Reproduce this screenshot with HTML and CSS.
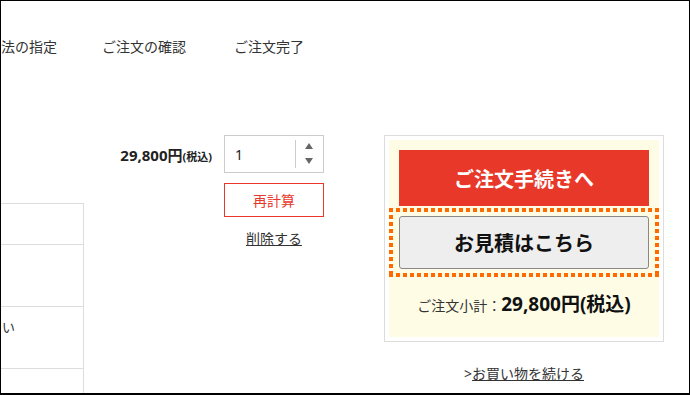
FILE: index.html
```html
<!DOCTYPE html>
<html>
<head>
  <title>ショッピングカート</title>
  <link rel="stylesheet" href="styles.css">
</head>
<body>
  <div class="frame">
    <ul class="steps">
      <li>法の指定</li>
      <li>ご注文の確認</li>
      <li>ご注文完了</li>
    </ul>

    <div class="cart">
      <div class="cart-table">
        <div class="cart-row row-head"></div>
        <div class="cart-row"></div>
        <div class="cart-row"><span class="row-text">い</span></div>
        <div class="cart-row"></div>
      </div>

      <div class="item-price">29,800円<small>(税込)</small></div>

      <div class="item-qty">
        <div class="qty-box">
          <span class="qty-value">1</span>
          <span class="qty-spin">
            <svg width="8" height="22" viewBox="0 0 8 22">
              <polygon points="4,0 8,6 0,6" fill="#666"/>
              <polygon points="0,15 8,15 4,21" fill="#666"/>
            </svg>
          </span>
        </div>
        <button class="btn-recalc">再計算</button>
        <a href="#" class="link-delete">削除する</a>
      </div>

      <div class="summary-col">
        <div class="summary">
          <div class="summary-inner">
            <button class="btn-order">ご注文手続きへ</button>
            <div class="estimate">
              <button class="btn-estimate">お見積はこちら</button>
            </div>
            <p class="subtotal">ご注文小計：<strong>29,800円(税込)</strong></p>
          </div>
        </div>
        <p class="continue">&gt;<a href="#">お買い物を続ける</a></p>
      </div>
    </div>
  </div>
</body>
</html>
```

FILE: styles.css
```css
* {
  margin: 0;
  padding: 0;
  box-sizing: border-box;
}

body {
  font-family: "Noto Sans", "Noto Sans CJK JP", sans-serif;
  color: #333;
  background: #fff;
}

.frame {
  width: 690px;
  height: 395px;
  border: 1px solid #000;
  border-bottom-width: 2px;
  overflow: hidden;
}

.steps {
  list-style: none;
  display: flex;
  gap: 49px;
  margin-top: 36px;
  font-size: 14px;
  line-height: 20px;
  white-space: nowrap;
}

.steps li:first-child {
  margin-right: -4px;
}

.steps li:last-child {
  margin-left: -1px;
}

.cart {
  display: flex;
  align-items: flex-start;
  margin-top: 78px;
}

/* left table, cut by the frame */
.cart-table {
  width: 83px;
  margin-top: 68px;
  border-top: 1px solid #ddd;
  border-right: 1px solid #ddd;
  flex-shrink: 0;
}

.cart-row {
  height: 62px;
  border-bottom: 1px solid #ddd;
  padding: 10px 0 0 1px;
  font-size: 13px;
  line-height: 20px;
  color: #333;
}

.row-head {
  height: 41px;
}

.cart-row:last-child {
  height: 40px;
  border-bottom: none;
}

.item-price {
  width: 140px;
  flex-shrink: 0;
  text-align: right;
  padding: 10px 12px 0 0;
  font-size: 15px;
  font-weight: bold;
  line-height: 20px;
  color: #222;
}

.item-price small {
  font-size: 11px;
}

.item-qty {
  width: 100px;
  flex-shrink: 0;
  display: flex;
  flex-direction: column;
  align-items: center;
}

.qty-box {
  width: 100px;
  height: 38px;
  border: 1px solid #ccc;
  display: flex;
  align-items: center;
}

.qty-value {
  flex: 1;
  padding-left: 10px;
  font-size: 14px;
  color: #222;
}

.qty-spin {
  width: 27px;
  height: 28px;
  margin-right: 1px;
  border-left: 1px solid #ccc;
  display: flex;
  align-items: center;
  justify-content: center;
}

.btn-recalc {
  width: 100px;
  height: 34px;
  margin-top: 10px;
  background: #fff;
  border: 1px solid #e8382a;
  color: #e8382a;
  font-family: inherit;
  font-size: 14px;
}

.link-delete {
  margin-top: 12px;
  font-size: 14px;
  line-height: 20px;
  color: #333;
}

.summary-col {
  width: 280px;
  margin-left: 60px;
  flex-shrink: 0;
}

.summary {
  border: 1px solid #ddd;
  padding: 4px;
}

.summary-inner {
  background: #fffce6;
  padding-top: 10px;
}

.btn-order {
  display: block;
  width: 250px;
  height: 56px;
  margin: 0 auto;
  background: #e8382a;
  border: none;
  color: #fff;
  font-family: inherit;
  font-size: 20px;
  font-weight: bold;
}

.estimate {
  margin-top: 2px;
  padding: 8px 10px;
  background:
    repeating-linear-gradient(90deg, #ff6a00 0 4px, transparent 4px 7px) top left / 100% 4px no-repeat,
    repeating-linear-gradient(90deg, #ff6a00 0 4px, transparent 4px 7px) bottom left / 100% 4px no-repeat,
    repeating-linear-gradient(180deg, #ff6a00 0 4px, transparent 4px 7px) top left / 4px 100% no-repeat,
    repeating-linear-gradient(180deg, #ff6a00 0 4px, transparent 4px 7px) top right / 4px 100% no-repeat;
}

.btn-estimate {
  display: block;
  width: 100%;
  height: 53px;
  background: #eee;
  border: 1px solid #888;
  border-radius: 3px;
  color: #111;
  font-family: inherit;
  font-size: 20px;
  font-weight: bold;
}

.subtotal {
  text-align: center;
  padding: 14px 0 19px;
  font-size: 14px;
  line-height: 26px;
  font-family: "Noto Sans CJK JP", sans-serif;
}

.subtotal strong {
  font-family: "Noto Sans", "Noto Sans CJK JP", sans-serif;
  font-size: 19px;
  color: #111;
}

.continue {
  margin-top: 22px;
  text-align: center;
  font-size: 14px;
  line-height: 20px;
}

.continue a {
  color: #333;
}
```
